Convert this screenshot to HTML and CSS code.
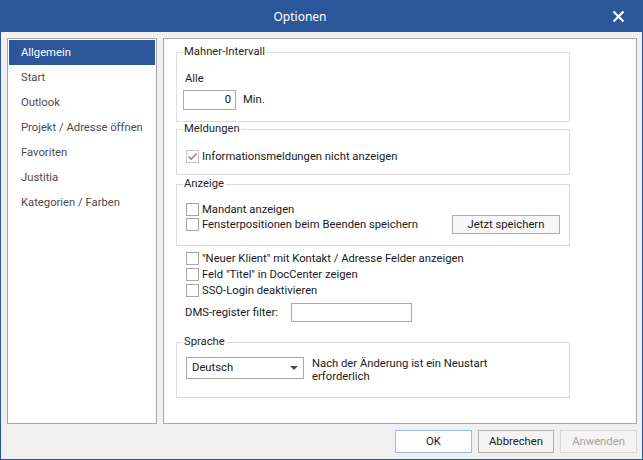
FILE: index.html
```html
<!DOCTYPE html>
<html>
<head>
    <title>Optionen</title>
    <link rel="stylesheet" href="styles.css">
</head>
<body>
    <div class="window">
        <div class="titlebar">
            <span class="title">Optionen</span>
            <span class="close">
                <svg width="13" height="13" viewBox="0 0 13 13"><path d="M1.5 1.5 L11.5 11.5 M11.5 1.5 L1.5 11.5" stroke="#fff" stroke-width="2.2" fill="none"/></svg>
            </span>
        </div>
        <div class="content">
            <div class="panels">
                <ul class="nav">
                    <li class="active">Allgemein</li>
                    <li>Start</li>
                    <li>Outlook</li>
                    <li>Projekt / Adresse öffnen</li>
                    <li>Favoriten</li>
                    <li>Justitia</li>
                    <li>Kategorien / Farben</li>
                </ul>
                <div class="page">
                    <fieldset class="group interval">
                        <legend>Mahner-Intervall</legend>
                        <div class="label-line">Alle</div>
                        <div class="interval-row">
                            <span class="textbox num">0</span>
                            <span>Min.</span>
                        </div>
                    </fieldset>

                    <fieldset class="group messages">
                        <legend>Meldungen</legend>
                        <div class="check-row disabled">
                            <span class="box checked">
                                <svg width="11" height="11" viewBox="0 0 11 11"><path d="M1.5 5.5 L4.2 8.2 L9.5 2.5" stroke="#8a8a8a" stroke-width="1.6" fill="none"/></svg>
                            </span>
                            Informationsmeldungen nicht anzeigen
                        </div>
                    </fieldset>

                    <fieldset class="group display">
                        <legend>Anzeige</legend>
                        <div class="display-body">
                            <div class="display-checks">
                                <div class="check-row tight"><span class="box"></span>Mandant anzeigen</div>
                                <div class="check-row tight"><span class="box"></span>Fensterpositionen beim Beenden speichern</div>
                            </div>
                            <button class="btn save">Jetzt speichern</button>
                        </div>
                    </fieldset>

                    <div class="loose">
                        <div class="check-row"><span class="box"></span>"Neuer Klient" mit Kontakt / Adresse Felder anzeigen</div>
                        <div class="check-row"><span class="box"></span>Feld "Titel" in DocCenter zeigen</div>
                        <div class="check-row"><span class="box"></span>SSO-Login deaktivieren</div>
                        <div class="filter-row">
                            <span class="filter-label">DMS-register filter:</span>
                            <span class="textbox filter"></span>
                        </div>
                    </div>

                    <fieldset class="group language">
                        <legend>Sprache</legend>
                        <div class="language-row">
                            <span class="select">Deutsch<span class="arrow"></span></span>
                            <span class="hint">Nach der Änderung ist ein Neustart erforderlich</span>
                        </div>
                    </fieldset>
                </div>
            </div>
            <div class="actions">
                <button class="btn primary">OK</button>
                <button class="btn">Abbrechen</button>
                <button class="btn off">Anwenden</button>
            </div>
        </div>
    </div>
</body>
</html>
```

FILE: styles.css
```css
* {
    margin: 0;
    padding: 0;
    box-sizing: border-box;
}

body {
    font-family: 'Roboto', 'Liberation Sans', sans-serif;
    font-size: 11.25px;
    color: #1a1a1a;
    background: #f0f0f0;
}

.window {
    width: 643px;
    height: 460px;
    background: #f0f0f0;
    border: 1px solid #2b579a;
    border-top: none;
    overflow: hidden;
}

.titlebar {
    height: 32px;
    margin: 0 -1px;
    background: #2b579a;
    display: flex;
    align-items: center;
    position: relative;
}

.title {
    flex: 1;
    text-align: center;
    padding-right: 43px;
    color: #fff;
    font-family: 'Noto Sans', 'Open Sans', sans-serif;
    font-size: 12px;
}

.close {
    position: absolute;
    right: 18px;
    top: 10px;
    width: 13px;
    height: 13px;
    display: flex;
}

.content {
    padding: 6px 5px 0 6px;
}

.panels {
    display: flex;
    gap: 6px;
    height: 386px;
}

/* left list */
.nav {
    list-style: none;
    width: 150px;
    background: #fff;
    border: 1px solid #a5a5a5;
    padding: 1px;
}

.nav li {
    height: 25px;
    line-height: 25px;
    padding-left: 12px;
    color: #4e4a4e;
    white-space: nowrap;
}

.nav li.active {
    background: #2b579a;
    color: #fff;
}

/* right page */
.page {
    flex: 1;
    background: #fff;
    border: 1px solid #a5a5a5;
    padding-top: 6px;
}

.group {
    width: 394px;
    margin-left: 12px;
    border: 1px solid #dcdcdc;
    padding: 0 9px 0 6px;
}

.group legend {
    padding: 0 1px;
    line-height: 14px;
    color: #262626;
}

.interval {
    padding-bottom: 11px;
}

.label-line {
    margin-top: 13px;
    margin-left: 2px;
    line-height: 14px;
}

.interval-row {
    margin-top: 4px;
    display: flex;
    align-items: center;
    gap: 7px;
    line-height: 14px;
}

.textbox {
    display: block;
    background: #fff;
    border: 1px solid #a9a9a9;
}

.textbox.num {
    width: 53px;
    height: 20px;
    line-height: 18px;
    text-align: right;
    padding-right: 4px;
}

.messages {
    padding-bottom: 10px;
}

.messages .check-row {
    margin-top: 12px;
}

.check-row {
    display: flex;
    align-items: center;
    height: 16px;
    white-space: nowrap;
}

.check-row.tight {
    height: 15px;
}

.box {
    width: 13px;
    height: 13px;
    margin-left: 3px;
    margin-right: 3px;
    border: 1px solid #a6a6a6;
    background: #fff;
    display: flex;
    align-items: center;
    justify-content: center;
    flex-shrink: 0;
}

.box.checked {
    border-color: #c4c4c4;
}

.display {
    margin-top: 2px;
    padding-bottom: 13px;
}

.display-body {
    margin-top: 11px;
    display: flex;
    justify-content: space-between;
    align-items: flex-end;
}

.btn {
    font-family: 'Roboto', 'Liberation Sans', sans-serif;
    font-size: 11.25px;
    color: #1a1a1a;
    background: #f4f4f4;
    border: 1px solid #adadad;
    height: 23px;
}

.btn.save {
    width: 108px;
    height: 19px;
    margin-bottom: -2px;
    background: #f7f7f7;
}

.loose {
    margin-top: 4px;
    padding-left: 19px;
}

.filter-row {
    margin-top: 5px;
    display: flex;
    align-items: center;
}

.filter-label {
    width: 106px;
    margin-left: 2px;
}

.textbox.filter {
    width: 121px;
    height: 19px;
}

.language {
    margin-top: 13px;
    padding-bottom: 14px;
}

.language-row {
    margin-top: 8px;
    display: flex;
    align-items: flex-start;
}

.select {
    position: relative;
    width: 118px;
    height: 22px;
    line-height: 20px;
    margin-left: 3px;
    padding-left: 5px;
    border: 1px solid #a9a9a9;
    background: #fff;
}

.arrow {
    position: absolute;
    right: 5px;
    top: 8px;
    border-left: 4px solid transparent;
    border-right: 4px solid transparent;
    border-top: 4px solid #4a4a4a;
}

.hint {
    width: 190px;
    margin-left: 8px;
    line-height: 13px;
}

/* bottom buttons */
.actions {
    margin-top: 6px;
    display: flex;
    justify-content: flex-end;
    gap: 6px;
}

.actions .btn {
    width: 77px;
}

.actions .btn:nth-child(2) {
    width: 76px;
}

.btn.primary {
    background: #fdfdfd;
    border-color: #9dbbe6;
}

.btn.off {
    color: #a3a3a3;
    background: #f4f4f4;
    border-color: #dadada;
}
```
